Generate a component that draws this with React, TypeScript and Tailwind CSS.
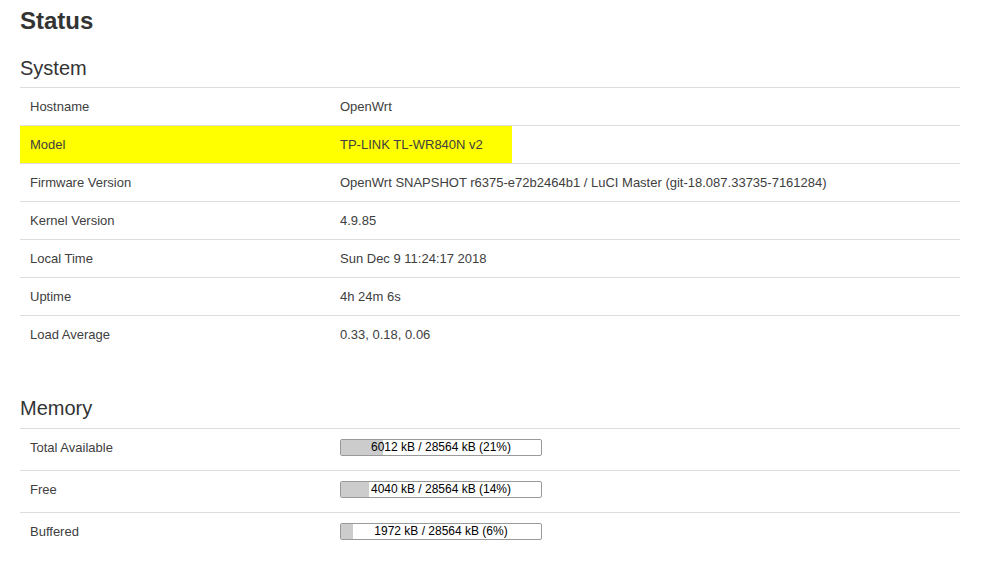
import React from "react";

const sys: [string, string][] = [
  ["Hostname", "OpenWrt"],
  ["Model", "TP-LINK TL-WR840N v2"],
  ["Firmware Version", "OpenWrt SNAPSHOT r6375-e72b2464b1 / LuCI Master (git-18.087.33735-7161284)"],
  ["Kernel Version", "4.9.85"],
  ["Local Time", "Sun Dec 9 11:24:17 2018"],
  ["Uptime", "4h 24m 6s"],
  ["Load Average", "0.33, 0.18, 0.06"],
];

const mem: [string, number, string][] = [
  ["Total Available", 21, "6012 kB / 28564 kB (21%)"],
  ["Free", 14, "4040 kB / 28564 kB (14%)"],
  ["Buffered", 6, "1972 kB / 28564 kB (6%)"],
];

export default function App() {
  return (
    <div
      className="w-[985px] h-[567px] bg-white text-[#404040] px-5 pt-[8px] overflow-hidden"
      style={{ fontFamily: '"Liberation Sans", Arial, sans-serif' }}
    >
      <h2 className="text-[24px] leading-[26px] font-bold text-[#333]">Status</h2>
      <h3 className="mt-[23px] text-[20px] leading-[22px] text-[#333]">System</h3>
      <div className="mt-[8px] w-[940px]">
        {sys.map(([k, v]) => (
          <div key={k} className="flex h-[38px] items-stretch border-t border-[#ddd] text-[13px]">
            <div className={`w-[310px] pl-[10px] flex items-center ${k === "Model" ? "bg-[#ffff00]" : ""}`}>{k}</div>
            <div className="flex-1 flex items-stretch">
              {k === "Model" ? (
                <div className="bg-[#ffff00] w-[182px] pl-[10px] flex items-center">{v}</div>
              ) : (
                <div className="pl-[10px] flex items-center">{v}</div>
              )}
            </div>
          </div>
        ))}
      </div>
      <h3 className="mt-[44px] text-[20px] leading-[22px] text-[#333]">Memory</h3>
      <div className="mt-[9px] w-[940px]">
        {mem.map(([k, p, t]) => (
          <div key={k} className="flex h-[42px] items-center pb-[4px] border-t border-[#ddd] text-[13px]">
            <div className="w-[310px] pl-[10px]">{k}</div>
            <div className="pl-[10px]">
              <div className="relative w-[202px] h-[17px] border border-[#999] rounded-[2px] bg-white overflow-hidden">
                <div className="absolute left-0 top-0 bottom-0 bg-[#ccc]" style={{ width: `${p}%` }} />
                <div className="relative text-center text-[12px] leading-[15px] text-black">{t}</div>
              </div>
            </div>
          </div>
        ))}
      </div>
    </div>
  );
}
